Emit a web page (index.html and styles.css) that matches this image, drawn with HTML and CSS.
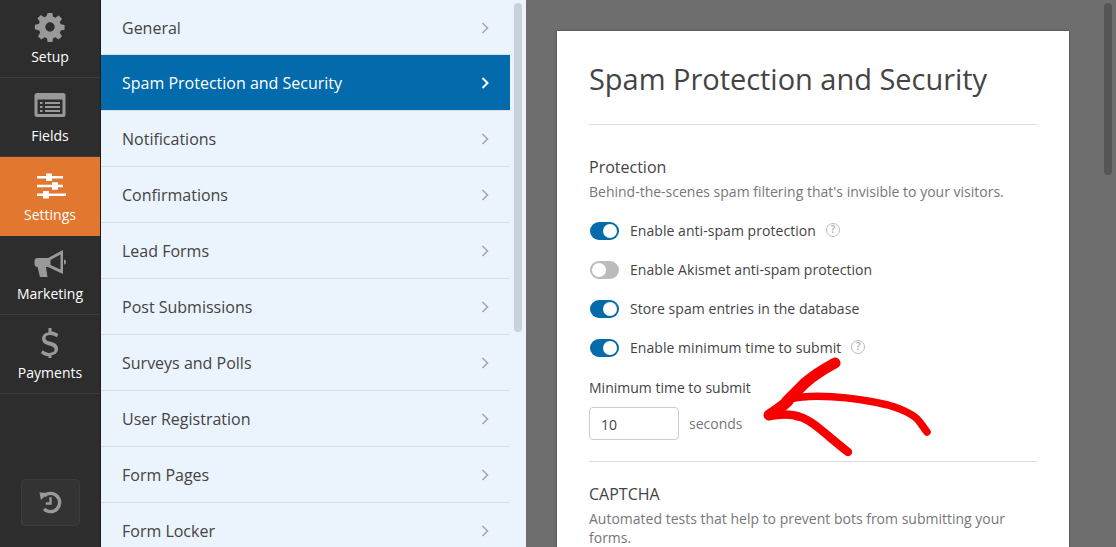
FILE: index.html
```html
<!DOCTYPE html>
<html lang="en">
<head>
<meta charset="utf-8">
<title>Spam Protection and Security</title>
<link rel="stylesheet" href="styles.css">
</head>
<body>
<div class="app">
  <nav class="rail">
    <a class="rail-item">
      <svg class="rail-icon" viewBox="-1 -1 34 34"><path fill-rule="evenodd" d="M13.500 1h5l.8 4.100 2.400 1 3.500-2.400 3.600 3.600-2.400 3.500 1 2.400 4.100.8v5l-4.100.8-1 2.400 2.400 3.500-3.600 3.600-3.500-2.400-2.400 1-.8 4.100h-5l-.8-4.100-2.400-1-3.500 2.400-3.600-3.600 2.400-3.500-1-2.400L0 18.500v-5l4.100-.8 1-2.400-2.400-3.500 3.600-3.600 3.500 2.400 2.400-1zM16 11a5 5 0 1 0 0 10 5 5 0 0 0 0-10z"/></svg>
      <span>Setup</span>
    </a>
    <a class="rail-item">
      <svg class="rail-icon" viewBox="0 0 32 32"><path fill-rule="evenodd" d="M3 4h26a2.500 2.500 0 0 1 2.500 2.500v19A2.500 2.500 0 0 1 29 28H3a2.500 2.500 0 0 1-2.500-2.500v-19A2.500 2.500 0 0 1 3 4zm.5 6.500V25h25V10.500zM6 13h2.500v2H6zm5 0h15v2H11zm-5 4h2.500v2H6zm5 0h15v2H11zm-5 4h2.500v2H6zm5 0h15v2H11z"/></svg>
      <span>Fields</span>
    </a>
    <a class="rail-item active">
      <svg class="rail-icon" viewBox="0 -2 32 32"><path d="M3 6h9V3.500h6V6h11v2.400H18V11h-6V8.400H3zM3 14.800h15v-2.600h6v2.600h5v2.400h-5v2.600h-6v-2.600H3zM3 23.600h6V21h6v2.600h20V26H15v2.600H9V26H3z"/></svg>
      <span>Settings</span>
    </a>
    <a class="rail-item">
      <svg class="rail-icon" viewBox="0 0 32 32"><path fill-rule="evenodd" d="M3 11h11L29 3v24L14 20h-2l1.500 10H6L3.500 20A3 3 0 0 1 .5 17.500v-4A3 3 0 0 1 3 11zM16.500 13v5l10 4.500V7.500zM30 12.500c1.200 0 2 1 2 2.500s-.8 2.500-2 2.500z"/></svg>
      <span>Marketing</span>
    </a>
    <a class="rail-item">
      <svg class="rail-icon" viewBox="0 -2 32 32"><path d="M14.500 0h3v3.600c3 .3 5.400 1.400 6.800 2.600l-1.500 3c-1.700-1.200-4-2.300-6.800-2.300-2.900 0-4.500 1.100-4.500 3 0 2.300 2.300 3 5.300 3.900 3.800 1.100 7.200 2.700 7.200 7 0 3.700-2.600 5.900-6.500 6.400V32h-3v-3.700c-3.100-.2-5.900-1.400-7.500-3l1.600-3c1.900 1.500 4.400 2.600 7.100 2.600 3 0 4.900-1.200 4.900-3.300 0-2.400-2.500-3.200-5.400-4-3.800-1.100-7.100-2.700-7.100-6.800 0-3.600 2.500-6 6.400-6.300z"/></svg>
      <span>Payments</span>
    </a>
    <button class="history" type="button" aria-label="Revisions">
      <svg viewBox="0 0 24 24"><path class="history-ring" d="M5.300 5.300A9.500 9.500 0 1 1 5.300 18.700"/><path class="history-hand" d="M12 6.500V13H7"/><path d="M.5 1.500 9.500 2 2 9.500z"/></svg>
    </button>
  </nav>

  <aside class="panel">
    <ul class="menu">
      <li class="menu-item"><span>General</span><svg class="chev" viewBox="0 0 8 12"><path d="M1.500 1 6.500 6 1.500 11"/></svg></li>
      <li class="menu-item current"><span>Spam Protection and Security</span><svg class="chev" viewBox="0 0 8 12"><path d="M1.500 1 6.500 6 1.500 11"/></svg></li>
      <li class="menu-item"><span>Notifications</span><svg class="chev" viewBox="0 0 8 12"><path d="M1.500 1 6.500 6 1.500 11"/></svg></li>
      <li class="menu-item"><span>Confirmations</span><svg class="chev" viewBox="0 0 8 12"><path d="M1.500 1 6.500 6 1.500 11"/></svg></li>
      <li class="menu-item"><span>Lead Forms</span><svg class="chev" viewBox="0 0 8 12"><path d="M1.500 1 6.500 6 1.500 11"/></svg></li>
      <li class="menu-item"><span>Post Submissions</span><svg class="chev" viewBox="0 0 8 12"><path d="M1.500 1 6.500 6 1.500 11"/></svg></li>
      <li class="menu-item"><span>Surveys and Polls</span><svg class="chev" viewBox="0 0 8 12"><path d="M1.500 1 6.500 6 1.500 11"/></svg></li>
      <li class="menu-item"><span>User Registration</span><svg class="chev" viewBox="0 0 8 12"><path d="M1.500 1 6.500 6 1.500 11"/></svg></li>
      <li class="menu-item"><span>Form Pages</span><svg class="chev" viewBox="0 0 8 12"><path d="M1.500 1 6.500 6 1.500 11"/></svg></li>
      <li class="menu-item"><span>Form Locker</span><svg class="chev" viewBox="0 0 8 12"><path d="M1.500 1 6.500 6 1.500 11"/></svg></li>
    </ul>
    <div class="thumb thumb-light"></div>
  </aside>

  <main class="stage">
    <section class="card">
      <h1>Spam Protection and Security</h1>
      <div class="rule rule-top"></div>
      <h2>Protection</h2>
      <p class="hint">Behind-the-scenes spam filtering that's invisible to your visitors.</p>
      <div class="toggle-row"><i class="toggle on"></i><span>Enable anti-spam protection</span><b class="help">?</b></div>
      <div class="toggle-row"><i class="toggle"></i><span>Enable Akismet anti-spam protection</span></div>
      <div class="toggle-row"><i class="toggle on"></i><span>Store spam entries in the database</span></div>
      <div class="toggle-row"><i class="toggle on"></i><span>Enable minimum time to submit</span><b class="help">?</b></div>
      <label class="field-label">Minimum time to submit</label>
      <div class="field-row"><div class="input">10</div><span>seconds</span></div>
      <div class="rule rule-mid"></div>
      <h2>CAPTCHA</h2>
      <p class="hint">Automated tests that help to prevent bots from submitting your forms.</p>
    </section>
    <div class="thumb thumb-dark"></div>
  </main>

  <svg class="scribble" viewBox="0 0 1116 547" aria-hidden="true">
    <path class="heavy" d="M835 363C822 370 813 376 805 383 797 391 792 396 787 401"/>
    <path class="heavy" d="M788 401C782 407 775 411 769 415"/>
    <path d="M790 399C810 394 850 396 888 405 905 410 915 416 919 421L927 432"/>
    <path class="lower" d="M769 416C780 414 790 413 800 417 812 420 825 434 848 452"/>
  </svg>
</div>
</body>
</html>
```
FILE: styles.css
```css
* { box-sizing: border-box; }
html, body { margin: 0; height: 100%; overflow: hidden; }
body { font-family: "Open Sans", "Noto Sans", sans-serif; color: #444; }
.app { position: relative; display: flex; width: 1116px; height: 547px; overflow: hidden; }

.rail { width: 101px; flex: none; display: flex; flex-direction: column; background: #2d2d2d; border-right: 1px solid #1c1c1c; }
.rail-item { height: 79px; display: flex; flex-direction: column; align-items: center; padding-top: 11px; color: #fff; font-size: 14px; line-height: 20px; border-bottom: 1px solid #3c3c3c; }
.rail-item:first-child { height: 78px; }
.rail-item:first-child span { margin-top: -1px; }
.rail-icon { width: 32px; height: 32px; fill: #999; margin-bottom: 5px; }
.rail-item.active { background: #e27730; border-bottom-color: #e27730; }
.rail-item.active .rail-icon { fill: #fff; }
.history { width: 59px; height: 47px; margin: auto 0 21px 21px; padding: 0; background: #333; border: 1px solid #3c3c3c; border-radius: 4px; display: flex; align-items: center; justify-content: center; }
.history svg { width: 23px; height: 23px; fill: #999; }
.history-ring { fill: none; stroke: #999; stroke-width: 3.500; }
.history-hand { fill: none; stroke: #999; stroke-width: 2.500; }

.panel { position: relative; width: 425px; flex: none; padding-right: 16px; background: #ebf3fc; }
.menu { list-style: none; margin: 0; padding: 0; }
.menu-item { height: 56px; display: flex; align-items: center; justify-content: space-between; padding: 0 21px; font-size: 16px; color: #444; border-bottom: 1px solid #d8dfe7; }
.menu-item:first-child { height: 55px; padding-top: 2px; }
.menu-item.current { padding-top: 1px; background: #036aab; background-clip: padding-box; color: #fff; }
.chev { width: 8px; height: 12px; fill: none; stroke: #a6a6a6; stroke-width: 1.500; }
.current .chev { stroke: #fff; stroke-width: 2; }

.stage { position: relative; flex: 1; min-width: 0; padding: 31px 47px 0 31px; background: #6e6e6e; }
.card { height: 600px; padding: 28px 32px 0; background: #fff; box-shadow: 0 0 2px rgba(0, 0, 0, .5); }
h1 { margin: 0; font-size: 29px; line-height: 40px; font-weight: 500; color: #444; letter-spacing: -.03px; }
.rule { height: 1px; background: #dcdcdc; }
.rule-top { margin: 25px 0 32px; }
.rule-mid { margin: 21px 0 22px; }
h2 { margin: 0; font-size: 16px; line-height: 20px; font-weight: 500; color: #444; }
.hint { margin: 5px 0 0; font-size: 14px; line-height: 19px; color: #777; }
.toggle-row { display: flex; align-items: center; height: 20px; margin: 19px 0 0 1px; font-size: 14px; color: #444; letter-spacing: .05px; }
.hint + .toggle-row { margin-top: 20px; }
.toggle-row span { margin-bottom: 2px; }
.toggle-row:last-of-type { margin-top: 18px; }
.toggle { position: relative; width: 29px; height: 18px; margin-right: 11px; border-radius: 9px; background: #bbb; }
.toggle::after { content: ""; position: absolute; left: 2px; top: 2px; width: 14px; height: 14px; border-radius: 50%; background: #fff; }
.toggle.on { background: #036aab; }
.toggle.on::after { left: 13px; }
.help { width: 14px; height: 14px; margin: -2px 0 0 10px; border: 1.500px solid #bbb; border-radius: 50%; font-size: 10px; line-height: 11px; font-weight: 600; text-align: center; color: #aaa; letter-spacing: 0; }
.field-label { display: block; margin-top: 20px; font-size: 14px; line-height: 20px; color: #444; }
.field-row { display: flex; align-items: center; margin-top: 9px; font-size: 14px; color: #777; }
.input { width: 90px; height: 33px; margin-right: 10px; padding: 0 11px; line-height: 33px; border: 1px solid #ccc; border-radius: 4px; color: #444; }

.thumb { position: absolute; width: 8px; border-radius: 4px; }
.thumb-light { top: 3px; right: 4px; height: 329px; background: #c9d1d9; }
.thumb-dark { top: 3px; right: 4px; height: 172px; background: #565656; }

.scribble { position: absolute; left: 0; top: 0; width: 1116px; height: 547px; pointer-events: none; fill: none; stroke: #f60000; stroke-width: 7.500; stroke-linecap: round; stroke-linejoin: round; }
.scribble .heavy { stroke-width: 11; }
.scribble .lower { stroke-width: 8.500; }
```
